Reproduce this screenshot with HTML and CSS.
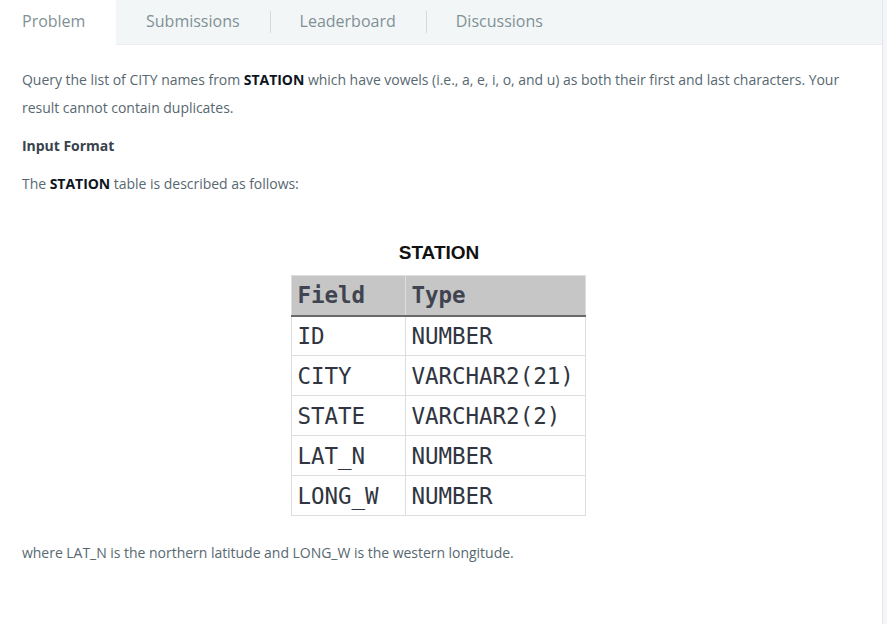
FILE: index.html
```html
<!DOCTYPE html>
<html>
<head>
<meta charset="utf-8">
<link rel="stylesheet" href="styles.css">
</head>
<body>
<div class="page">
  <nav class="tabs">
    <div class="tab active">Problem</div>
    <div class="tab">Submissions</div>
    <div class="tab sep">Leaderboard</div>
    <div class="tab sep">Discussions</div>
  </nav>
  <main class="content">
    <p>Query the list of CITY names from <strong>STATION</strong> which have vowels (i.e., a, e, i, o, and u) as both their first and last characters. Your result cannot contain duplicates.</p>
    <p class="heading"><strong>Input Format</strong></p>
    <p>The <strong>STATION</strong> table is described as follows:</p>
    <figure class="figure">
      <div class="fig-title">STATION</div>
      <table class="schema">
        <thead>
          <tr><th>Field</th><th>Type</th></tr>
        </thead>
        <tbody>
          <tr><td>ID</td><td>NUMBER</td></tr>
          <tr><td>CITY</td><td>VARCHAR2(21)</td></tr>
          <tr><td>STATE</td><td>VARCHAR2(2)</td></tr>
          <tr><td>LAT_N</td><td>NUMBER</td></tr>
          <tr><td>LONG_W</td><td>NUMBER</td></tr>
        </tbody>
      </table>
    </figure>
    <p>where LAT_N is the northern latitude and LONG_W is the western longitude.</p>
  </main>
</div>
</body>
</html>
```

FILE: styles.css
```css
html, body {
  margin: 0;
  padding: 0;
  background: #f3f5f6;
  height: 100%;
}
.page {
  width: 883px;
  min-height: 624px;
  background: #ffffff;
  border-right: 1px solid #e3e7e9;
  font-family: "Open Sans", sans-serif;
  box-sizing: border-box;
}
.tabs {
  display: flex;
  height: 45px;
  background: #f3f6f7;
  border-bottom: 1px solid #eaeef0;
  box-sizing: border-box;
}
.tab {
  position: relative;
  display: flex;
  align-items: center;
  padding: 0 30px;
  font-size: 16px;
  color: #7f9196;
  height: 42px;
}
.tab.active {
  background: #ffffff;
  width: 116px;
  box-sizing: border-box;
  padding: 0 22px 4px 22px;
  height: 46px;
  margin-bottom: -1px;
}
.tab.sep::before {
  content: "";
  position: absolute;
  left: 0;
  top: 11px;
  height: 22px;
  border-left: 1px solid #d4dadd;
}
.content {
  padding: 21px 22px 40px 22px;
  font-size: 14px;
  line-height: 28px;
  color: #576871;
  letter-spacing: -0.03px;
}
.content p {
  margin: 0 0 10px 0;
}
.content strong {
  color: #0e141e;
  font-weight: 700;
}
.heading strong {
  color: #39424e;
}
.figure {
  margin: 43px 0 23px 0;
  padding-right: 6px;
  display: flex;
  flex-direction: column;
  align-items: center;
}
.fig-title {
  font-family: "Liberation Sans", Arial, sans-serif;
  font-weight: 700;
  font-size: 19px;
  line-height: 24px;
  color: #111111;
  margin-bottom: 10px;
  padding-left: 2px;
}
.schema {
  border-collapse: collapse;
  font-family: "DejaVu Sans Mono", monospace;
  font-size: 22.5px;
  color: #30353f;
}
.schema th,
.schema td {
  height: 40px;
  padding: 0 6px;
  text-align: left;
  border: 1px solid #dedede;
  box-sizing: border-box;
  line-height: 38px;
}
.schema th {
  background: #c6c6c6;
  color: #3f4450;
  font-weight: 700;
  border-bottom: 2px solid #6a6a6a;
}
.schema th:first-child,
.schema td:first-child {
  width: 114px;
}
.schema th:last-child,
.schema td:last-child {
  width: 180px;
}
```
